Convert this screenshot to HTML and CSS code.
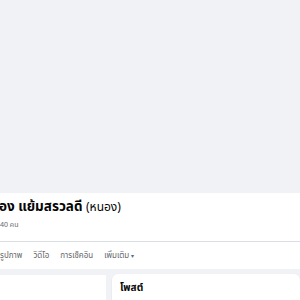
FILE: index.html
```html
<html>
    <head>
        <title>Profile</title>
        <link rel="stylesheet" href="styles.css">
    </head>
    <body>
        <div class="cover"></div>
        <div class="header">
            <div class="name-block">
                <h1 class="name">อง แย้มสรวลดี <span class="nick">(หนอง)</span></h1>
                <div class="friends">40 คน</div>
            </div>
            <div class="tabs">
                <span class="tab">รูปภาพ</span>
                <span class="tab">วิดีโอ</span>
                <span class="tab">การเช็คอิน</span>
                <span class="tab">เพิ่มเติม&nbsp;<span class="caret">▾</span></span>
            </div>
        </div>
        <div class="main">
            <div class="side-card"></div>
            <div class="post-card">
                <div class="post-title">โพสต์</div>
            </div>
        </div>
    </body>
</html>
```

FILE: styles.css
```css
* {
    margin: 0;
    padding: 0;
    box-sizing: border-box;
}

body {
    background-color: #f0f2f5;
    font-family: "Noto Sans Thai", "Liberation Sans", sans-serif;
    color: #050505;
    width: 300px;
    height: 300px;
    overflow: hidden;
}

.cover {
    height: 193px;
    background-color: #f0f2f5;
}

.header {
    background-color: white;
    height: 76px;
}

.name-block {
    padding-top: 5px;
    height: 49px;
    border-bottom: 1px solid #dadde1;
}

.name {
    font-size: 13.5px;
    font-weight: bold;
    line-height: 18px;
    margin-left: -1px;
}

.nick {
    font-weight: normal;
    font-size: 12px;
}

.friends {
    font-size: 7px;
    color: #65676b;
    line-height: 10px;
    margin-top: 4px;
}

.tabs {
    display: flex;
    gap: 11px;
    padding-top: 8px;
    font-size: 8px;
    line-height: 12px;
    color: #65676b;
}

.caret {
    font-size: 6px;
}

.main {
    display: flex;
    gap: 6px;
    padding-top: 5px;
}

.side-card {
    width: 106px;
    height: 40px;
    margin-top: 1px;
    background-color: white;
}

.post-card {
    flex: 1;
    height: 40px;
    background-color: white;
    border-radius: 6px;
    box-shadow: 0 1px 2px rgba(0, 0, 0, 0.1);
    padding: 6px 8px;
}

.post-title {
    font-size: 10px;
    font-weight: bold;
}
```
